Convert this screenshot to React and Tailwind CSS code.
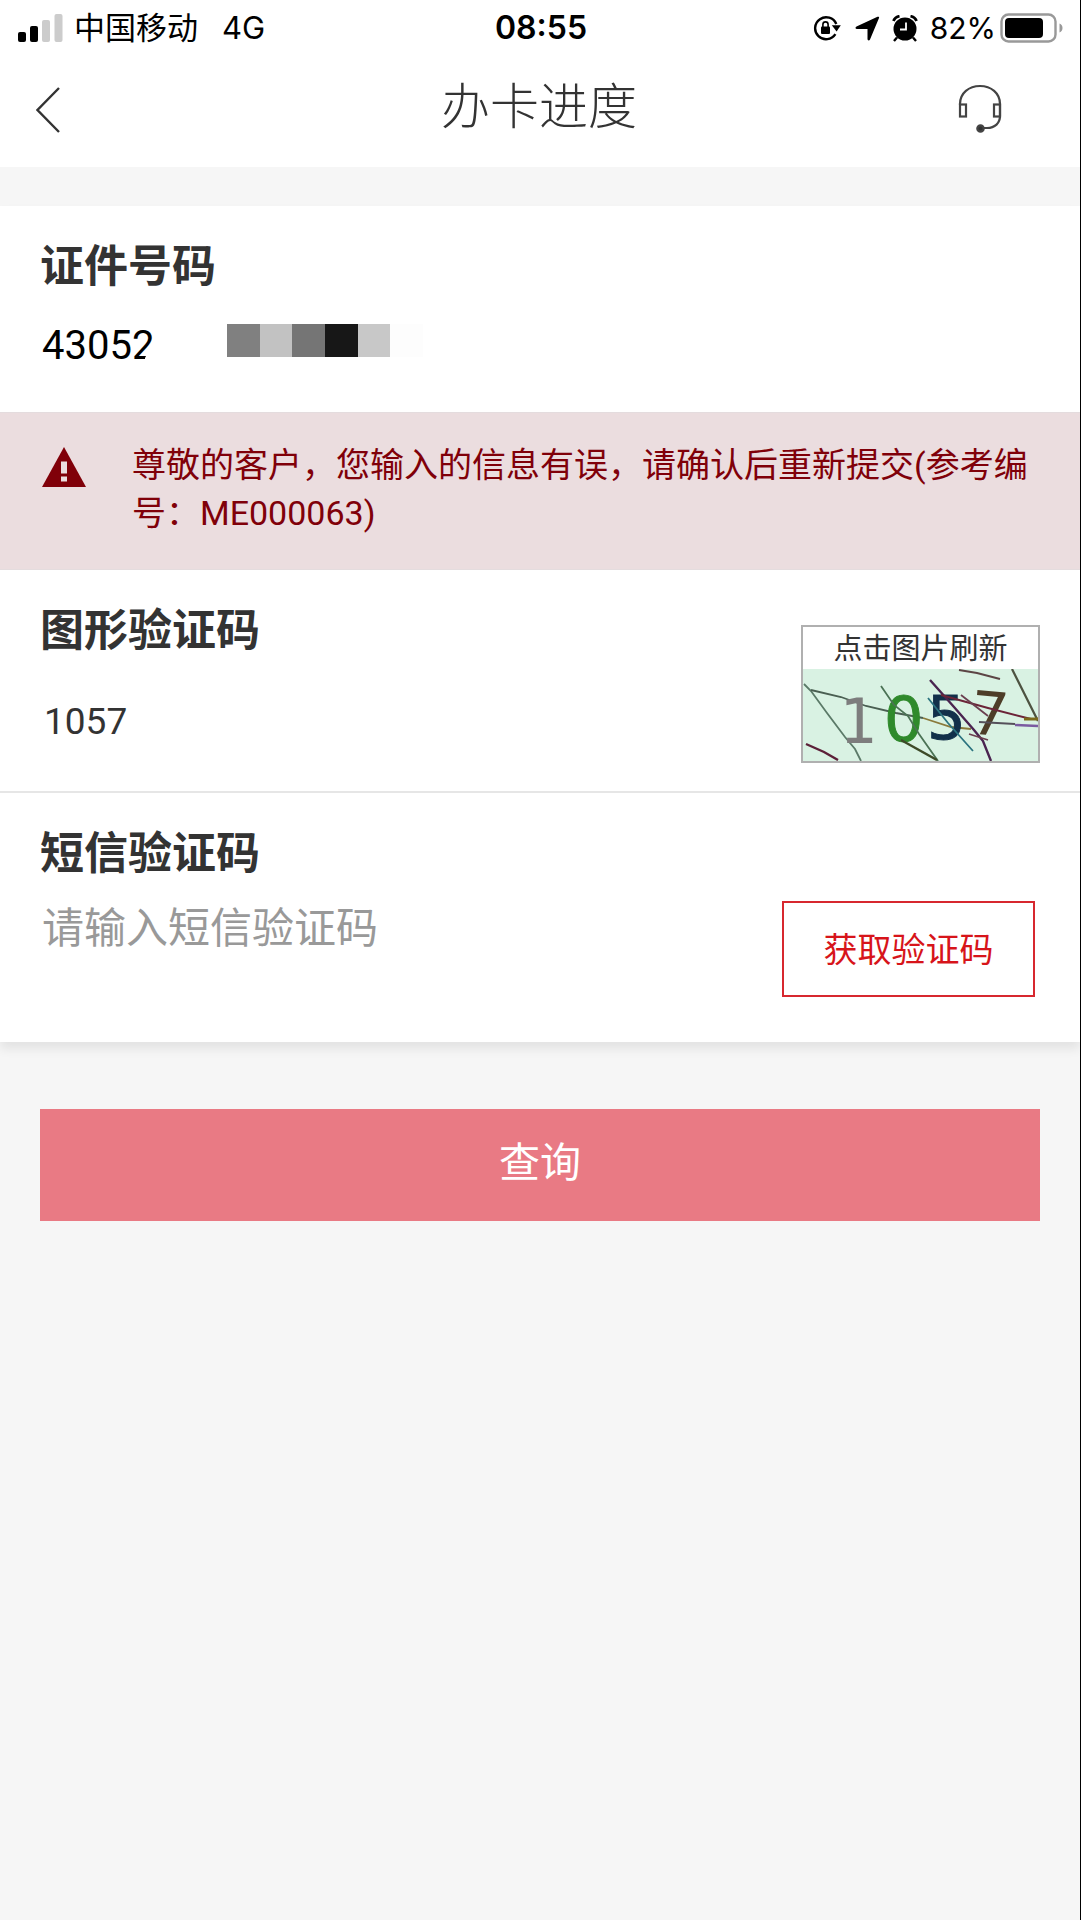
import { useState } from 'react';

function SignalIcon() {
  return (
    <svg viewBox="0 0 45 28" className="w-[45px] h-7" aria-hidden="true">
      <rect x="0" y="18" width="8" height="10" rx="2" fill="#000" />
      <rect x="12" y="12" width="8" height="16" rx="2" fill="#000" />
      <rect x="24" y="6" width="8" height="22" rx="2" fill="#ccc" />
      <rect x="36.500" y="0" width="8" height="28" rx="2" fill="#ccc" />
    </svg>
  );
}

function RotationLockIcon() {
  return (
    <svg viewBox="0 0 28 26" className="w-7 h-[26px]" fill="none" aria-hidden="true">
      <path d="M22.400 19.200A11 11 0 1 1 23.300 9" stroke="#000" strokeWidth="2.400" />
      <path d="M18.800 10.200h9L23.600 16.400z" fill="#000" />
      <rect x="8" y="11.500" width="9" height="7.500" rx="1" fill="#000" />
      <path d="M9.900 12V9.500a2.600 2.600 0 0 1 5.200 0V12" stroke="#000" strokeWidth="1.600" />
    </svg>
  );
}

function LocationIcon() {
  return (
    <svg viewBox="0 0 25 25" className="w-[25px] h-[25px]" aria-hidden="true">
      <path d="M24 2L15 23.500c-.7 1.400-2.500 1.200-2.500-.5V13H2c-1.800 0-2-1.800-.5-2.500L22.500.8c1.200-.5 2 .2 1.500 1.200z" fill="#000" />
    </svg>
  );
}

function AlarmIcon() {
  return (
    <svg viewBox="0 0 26 27" className="w-[26px] h-[27px]" fill="none" aria-hidden="true">
      <circle cx="13" cy="14" r="11.500" fill="#000" />
      <path d="M1.500 6Q3 2 7.500 1.200M24.500 6Q23 2 18.500 1.200" stroke="#000" strokeWidth="2.800" />
      <path d="M5 22.500l-3 3.500M21 22.500l3 3.500" stroke="#000" strokeWidth="2.400" />
      <path d="M14 7.500v7H8" stroke="#fff" strokeWidth="1.800" />
    </svg>
  );
}

function BatteryIcon() {
  return (
    <svg viewBox="0 0 64 30" className="w-16 h-[30px]" fill="none" aria-hidden="true">
      <rect x="1.500" y="1.500" width="54" height="27" rx="7" stroke="#999" strokeWidth="2.400" />
      <rect x="5" y="5" width="38" height="20" rx="4" fill="#000" />
      <path d="M59.500 10.500c4 1.500 4 7.500 0 9z" fill="#999" />
    </svg>
  );
}

function HeadsetIcon() {
  return (
    <svg viewBox="0 0 44 50" className="w-11 h-[50px]" fill="none" stroke="#444" strokeWidth="2.200" aria-hidden="true">
      <path d="M2 21v-1C2 9 11 2 22 2s20 7 20 18v12c0 7-5 12-13 12h-6" />
      <rect x="2" y="20.500" width="6" height="12" />
      <rect x="36" y="20.500" width="6" height="12" />
      <circle cx="22.500" cy="44.500" r="3.200" fill="#333" />
    </svg>
  );
}

function WarningIcon() {
  return (
    <svg viewBox="0 0 44 40" className="w-11 h-10 shrink-0" aria-hidden="true">
      <path d="M22 0L44 40H0z" fill="#800009" />
      <rect x="19" y="14.500" width="6" height="12" fill="#ebdddf" />
      <rect x="19" y="29.500" width="6" height="5" fill="#ebdddf" />
    </svg>
  );
}

function CaptchaImage() {
  return (
    <svg viewBox="0 0 235 92" className="block w-full bg-[#d9f2e3]" fill="none" strokeWidth="1.800" role="img" aria-label="1057">
      <path d="M1 15l7 7L24 44l18 24 10 12 6 12" stroke="#5b7a68" />
      <path d="M8 21l30 7 25 9 30 7 27 5" stroke="#4a5f52" />
      <path d="M120 49l28 9 20 2" stroke="#8a7a3c" />
      <path d="M3 75l18 8 14 8" stroke="#5c2038" strokeWidth="2.400" />
      <text x="36" y="74" fontSize="62" fill="#7d7d7d" fontFamily="DejaVu Sans Mono">1</text>
      <text x="81" y="72" fontSize="62" fill="#2f8a2c" stroke="#2f8a2c" strokeWidth="1" fontFamily="DejaVu Sans">0</text>
      <text x="124" y="70" fontSize="61" fill="#12304a" stroke="#12304a" strokeWidth="1" fontFamily="DejaVu Sans">5</text>
      <text x="167" y="66" fontSize="60" fill="#4d3d28" fontFamily="DejaVu Sans" transform="rotate(5 185 50)">7</text>
      <path d="M78 17l13 19 14 11 11 18 19 27" stroke="#4b7355" />
      <path d="M98 71l36 20" stroke="#3d4a28" strokeWidth="2.400" />
      <path d="M127 11l24 27 20 23 9 11 8 20" stroke="#4a2450" strokeWidth="2.400" />
      <path d="M125 29l20 25 25 28" stroke="#2c7480" />
      <path d="M156 1l18 3 23 6" stroke="#5c4545" strokeWidth="2" />
      <path d="M209 0l12 24 14 28" stroke="#4d5240" strokeWidth="2.200" />
      <path d="M138 26l47 13 43 11" stroke="#6b2438" strokeWidth="2" />
      <path d="M158 26l27 21M166 65l19 6" stroke="#6b4050" />
      <path d="M176 53l36 2" stroke="#55505a" strokeWidth="2" />
      <path d="M212 56l23 1" stroke="#7a5aa0" strokeWidth="2.400" />
      <path d="M221 50h14" stroke="#7a6a1c" strokeWidth="3" />
    </svg>
  );
}

function StatusBar() {
  return (
    <div className="flex items-center justify-between h-14 pl-[14px] pr-4 text-[31px] leading-[36px] text-black">
      <div className="flex flex-1 items-center pl-1">
        <SignalIcon />
        <span className="ml-[11px]">中国移动</span>
        <span className="ml-6">4G</span>
      </div>
      <span className="text-[32px] font-semibold">08:55</span>
      <div className="flex flex-1 items-center justify-end">
        <RotationLockIcon />
        <span className="ml-[14px]"><LocationIcon /></span>
        <span className="ml-3"><AlarmIcon /></span>
        <span className="ml-3 mr-1 text-[30px]">82%</span>
        <BatteryIcon />
      </div>
    </div>
  );
}

// Mosaic covering the rest of the ID number
function Mosaic() {
  return (
    <div className="flex h-[33px]" aria-hidden="true">
      <span className="w-[33px] bg-[#808080]" />
      <span className="w-8 bg-[#c2c2c2]" />
      <span className="w-[33px] bg-[#757575]" />
      <span className="w-[33px] bg-[#171717]" />
      <span className="w-8 bg-[#c8c8c8]" />
      <span className="w-[33px] bg-[#fdfdfd]" />
    </div>
  );
}

const labelClass = 'block text-[44px] leading-[60px] font-bold text-[#333]';
const inputClass = 'block h-[60px] bg-transparent outline-none';

export default function App() {
  const [idNumber, setIdNumber] = useState('43052');
  const [captcha, setCaptcha] = useState('1057');
  const [smsCode, setSmsCode] = useState('');

  return (
    <div className="min-h-screen border-r border-black bg-[#f6f6f6] font-[Inter,'Noto_Sans_CJK_SC',sans-serif]">
      <header className="bg-white">
        <StatusBar />
        <div className="flex items-center justify-between h-[111px] pl-9 pr-[78px] pb-[10px]">
          <button type="button" aria-label="返回" className="w-11 pt-[6px]">
            <svg viewBox="0 0 24 46" className="w-6 h-[46px]" fill="none" aria-hidden="true">
              <path d="M23 1L1.500 23 23 45" stroke="#333" strokeWidth="2.400" />
            </svg>
          </button>
          <h1 className="pl-10 text-[49px] leading-[60px] font-light text-[#333]">办卡进度</h1>
          <button type="button" aria-label="客服" className="pt-1">
            <HeadsetIcon />
          </button>
        </div>
      </header>

      <main className="mt-[39px]">
        <form onSubmit={(e) => e.preventDefault()}>
          <div className="bg-white shadow-[0_7px_10px_rgba(0,0,0,0.08)]">
            <section className="px-10 pt-[30px] pb-9">
              <label htmlFor="id-number" className={labelClass}>证件号码</label>
              <div className="flex items-start mt-5">
                <div className="relative mr-[70px]">
                  <input
                    id="id-number"
                    className={`${inputClass} w-[117px] pl-[2px] font-[Roboto] text-[40px] text-black`}
                    value={idNumber}
                    onChange={(e) => setIdNumber(e.target.value)}
                  />
                  <svg viewBox="0 0 16 32" className="absolute right-0 bottom-3 w-4 h-8" aria-hidden="true">
                    <path d="M16 0V32H4V26L11 12z" fill="#fff" />
                  </svg>
                </div>
                <div className="pt-2"><Mosaic /></div>
              </div>
            </section>

            <div role="alert" className="flex items-start pl-[42px] pr-10 pt-7 pb-8 border-y border-[#e4dcde] bg-[#ebdddf]">
              <div className="pt-[6px]"><WarningIcon /></div>
              <p className="ml-[46px] font-[Roboto,'Noto_Sans_CJK_SC',sans-serif] text-[34px] leading-[48px] text-[#800009]">
                尊敬的客户，您输入的信息有误，请确认后重新提交(参考编号：ME000063)
              </p>
            </div>

            <section className="flex justify-between px-10 pt-[30px] pb-7 border-b-2 border-[#e6e6e6]">
              <div className="pb-3">
                <label htmlFor="captcha" className={labelClass}>图形验证码</label>
                <input
                  id="captcha"
                  className={`${inputClass} mt-[31px] w-[400px] pl-1 font-[Roboto] text-[37px] text-[#333]`}
                  value={captcha}
                  onChange={(e) => setCaptcha(e.target.value)}
                />
              </div>
              <button type="button" className="self-end w-[239px] border-2 border-[#b0b0b0] bg-white">
                <span className="block pt-[2px] text-[29px] leading-[40px] text-[#333]">点击图片刷新</span>
                <CaptchaImage />
              </button>
            </section>

            <section className="flex justify-between pl-10 pr-[45px] pt-[30px] pb-[45px]">
              <div className="pb-10">
                <label htmlFor="sms-code" className={labelClass}>短信验证码</label>
                <input
                  id="sms-code"
                  className={`${inputClass} mt-[14px] w-[400px] pl-[2px] text-[42px] text-[#333] placeholder:text-[#999]`}
                  placeholder="请输入短信验证码"
                  value={smsCode}
                  onChange={(e) => setSmsCode(e.target.value)}
                />
              </div>
              <button
                type="button"
                className="self-end w-[253px] h-24 border-2 border-[#d7282f] bg-white text-[34px] text-[#d7141a]"
              >
                获取验证码
              </button>
            </section>
          </div>

          <div className="px-10 pt-[67px]">
            <button type="submit" className="block w-full h-28 pb-1 bg-[#e97a84] text-[41px] text-white">
              查询
            </button>
          </div>
        </form>
      </main>
    </div>
  );
}
